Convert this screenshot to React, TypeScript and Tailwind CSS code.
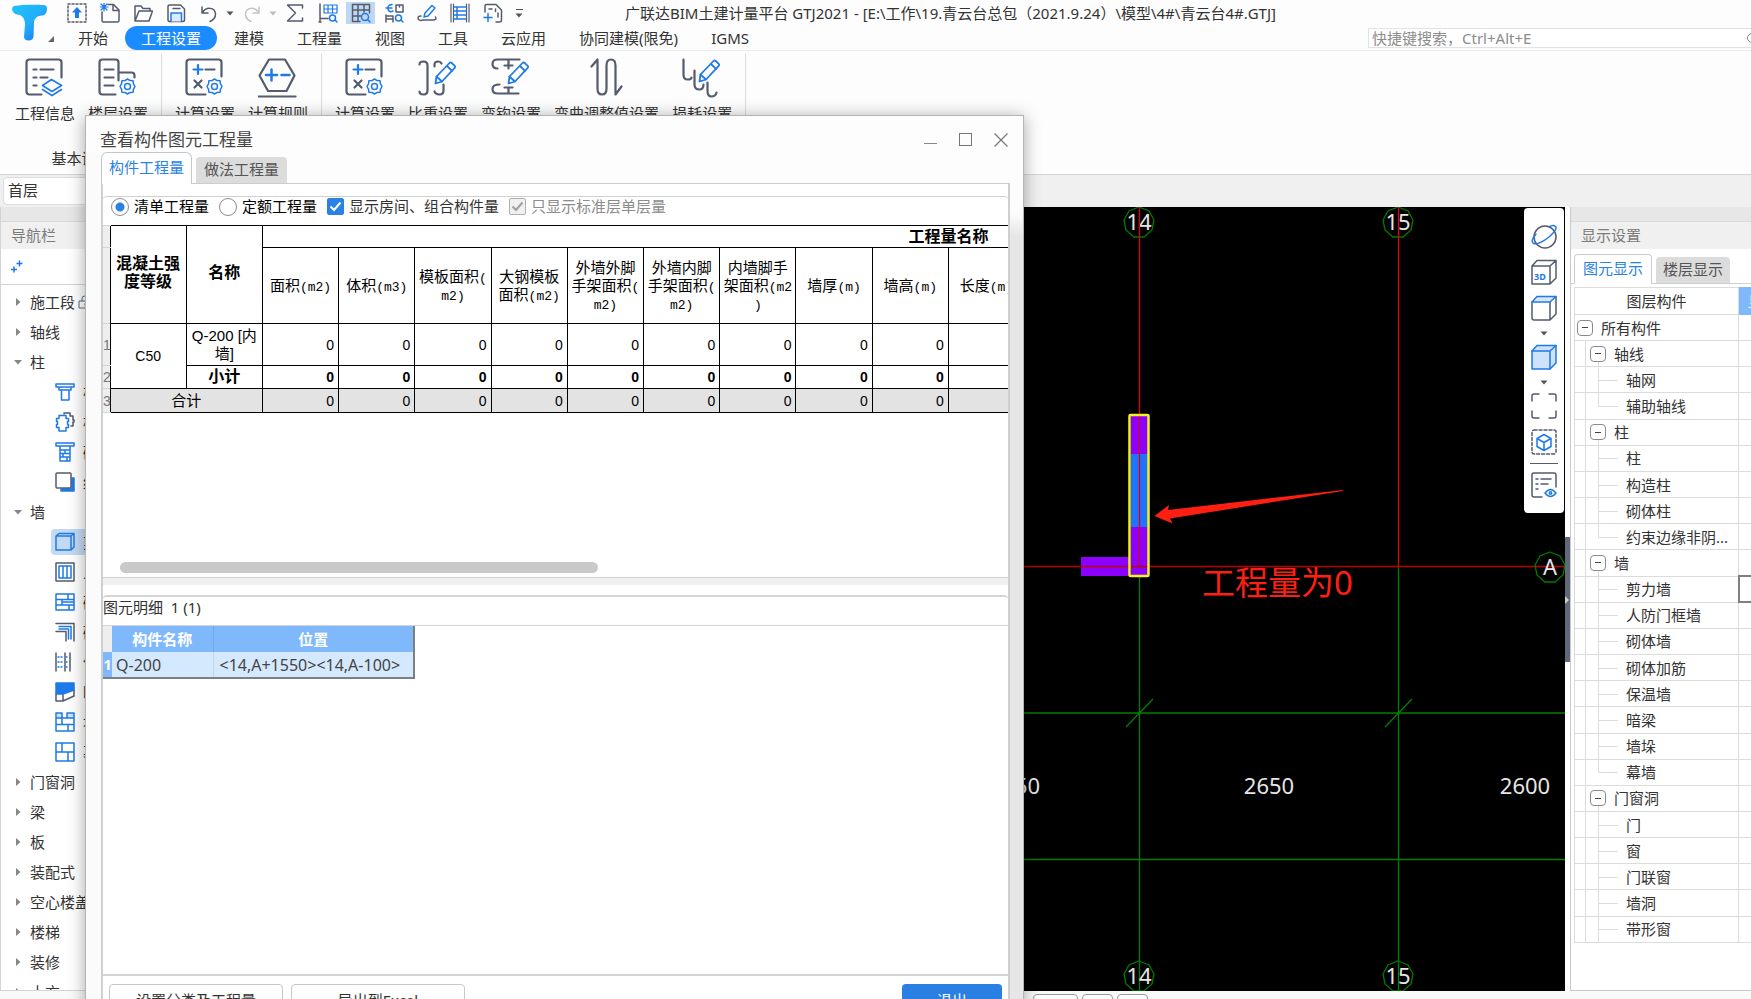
import type { ReactNode } from 'react';

const INK = '#545b6d';
const BLUE = '#1f7ae8';

function Icon({ w = 20, h = 20, children }: { w?: number; h?: number; children: ReactNode }) {
  return (
    <svg
      width={w}
      height={h}
      viewBox={`0 0 ${w} ${h}`}
      fill="none"
      stroke={INK}
      strokeWidth="1.5"
      strokeLinecap="round"
      strokeLinejoin="round"
      className="shrink-0"
      aria-hidden="true"
    >
      {children}
    </svg>
  );
}

function Caret({ color = '#555' }: { color?: string }) {
  return (
    <svg width="8" height="5" viewBox="0 0 8 5" className="shrink-0" aria-hidden="true">
      <path d="M0.5 0.5h7L4 4.5z" fill={color} />
    </svg>
  );
}

const gearPath =
  'M9 1.5l2.6 1.6 3 .1.3 3L16.500 9l-1.600 2.800-.3 3-3 .1L9 16.500l-2.600-1.600-3-.1-.3-3L1.500 9l1.600-2.800.3-3 3-.1z';

function Gear({ x, y }: { x: number; y: number }) {
  return (
    <g transform={`translate(${x} ${y})`} stroke={BLUE} strokeWidth="1.500">
      <path d={gearPath} />
      <circle cx="9" cy="9" r="3" />
    </g>
  );
}

function Pencil({ x, y }: { x: number; y: number }) {
  return (
    <g transform={`translate(${x} ${y})`} stroke={BLUE} strokeWidth="1.800" fill="#fff">
      <path d="M1 22l1-7L15 1.500q1-1 2.200 0l3 2.800q1 1 0 2L7.500 20z" />
      <path d="M12.500 4.500l5 4.800M2 15l5.500 5" fill="none" />
    </g>
  );
}

const quickIcons: Record<string, ReactNode> = {
  pin: (
    <>
      <rect x="1" y="1" width="18" height="18" strokeDasharray="2 2" />
      <path d="M10 4l5 5.500h-3V15H8V9.500H5z" fill={BLUE} stroke="none" />
    </>
  ),
  create: (
    <>
      <path d="M8 1.500h5.500L19 7v10.500q0 1.500-1.500 1.500h-14Q2 19 2 17.500V9M13 2v5.500h5.500" />
      <path d="M1 1l6 6M7 1L1 7M4 0v8M0 4h8" stroke={BLUE} strokeWidth="1.200" />
    </>
  ),
  open: <path d="M2 18V3h6l2 2.500h7V8M2 18L6 8h13.500L16 18z" />,
  save: (
    <>
      <path d="M2 3.500Q2 2 3.500 2h11L18.500 6v11q0 1.500-1.500 1.500H3.500Q2 18.500 2 17z" />
      <path d="M7 5.500h7" />
      <path d="M5 18.500V10h10.500v8.500" stroke={BLUE} fill="#dcebfd" />
    </>
  ),
  undo: <path d="M3 4v6h6M3.500 9.500C7 3.500 16 4 16.500 11c0 4-3 6.500-5.500 7.500" />,
  redo: <path d="M17 4v6h-6M16.500 9.500C13 3.500 4 4 3.500 11c0 4 3 6.500 5.500 7.500" stroke="#c4c4c4" />,
  sum: <path d="M17.500 5V2h-15l8 8-8 8h15v-3" />,
  report: (
    <>
      <path d="M2 1v14.500M2 15.500h8M1 19h2M2 15.500V19" />
      <path d="M6 2h13v8H6zM6 6h13M10 2v8M14.500 2v8" stroke={BLUE} strokeWidth="1.200" />
      <circle cx="14.500" cy="15" r="3" stroke={BLUE} />
      <path d="M17 17l2 2" stroke={BLUE} />
    </>
  ),
  view: (
    <>
      <path d="M9 18.500H1.500v-17h17V10M1.500 7h17M1.500 13H10M7 1.500v17M13 1.500V9" />
      <circle cx="14" cy="14" r="3.500" stroke={BLUE} />
      <path d="M16.500 16.500L19 19" stroke={BLUE} />
    </>
  ),
  steel: (
    <>
      <path d="M12 2h7v7h-7zM2 13h7v6M2 12v7M2 16h7M15.500 2v2" />
      <path d="M8 1.500Q3 2 4 6t5 2M2 5h6" stroke={BLUE} />
      <circle cx="14.500" cy="15" r="3" stroke={BLUE} />
      <path d="M17 17l2 2" stroke={BLUE} />
    </>
  ),
  edit: (
    <>
      <path d="M4 13Q0 13 1.500 16.500 3 18 6 17h10q4 0 2.500-3" />
      <path d="M7 14l1-4 7-7.500 3 2.500-7 8z" stroke={BLUE} />
    </>
  ),
  grid: (
    <>
      <path d="M3.500 1v18M16.500 1v18M1 1v18M19 1v18" strokeWidth="1.200" />
      <path d="M4 4h12M4 8h12M4 12h12M4 16h12M7 4v12" stroke={BLUE} />
    </>
  ),
  addPage: (
    <>
      <path d="M2 9V3q0-1.500 1.500-1.500H13L18.500 7v10q0 2-2 2H13M6 6h3M12.500 8.500V6M15 10v4" />
      <path d="M1 14.500h8M5 10.500v8" stroke={BLUE} />
    </>
  ),
};

function QuickButton({ name, label, active = false }: { name: string; label: string; active?: boolean }) {
  return (
    <button
      type="button"
      aria-label={label}
      className={
        active
          ? 'flex h-[22px] w-[29px] items-center justify-center bg-[#bfd8f2]'
          : 'flex h-[22px] w-[29px] items-center justify-center'
      }
    >
      <Icon>{quickIcons[name]}</Icon>
    </button>
  );
}

function Logo() {
  return (
    <svg width="38" height="38" viewBox="0 0 38 38" aria-hidden="true">
      <defs>
        <linearGradient id="logoFill" x1="0" y1="0" x2="1" y2="1">
          <stop offset="0" stopColor="#1cc4f5" />
          <stop offset="0.5" stopColor="#22aefb" />
          <stop offset="1" stopColor="#0b6cf5" />
        </linearGradient>
      </defs>
      <path
        d="M4 2C12 .5 26 .5 34 1q3.500.5 3 4.500-.5 5-4 6c-5 0-8 2-9 6l-.5 15q-.5 4-5 4t-4.500-4l1-12C15 14 12 11 7 10.500 3 10 0 3.500 4 2z"
        fill="url(#logoFill)"
      />
    </svg>
  );
}

const calcSettingIcon = (
  <>
    <path d="M20 36H4q-3 0-3-3V4q0-3 3-3h29q3 0 3 3v14" />
    <path d="M8 11h9M12.500 6.500v9" stroke={BLUE} />
    <path d="M20 11h9M9 22l7 7M16 22l-7 7" />
    <Gear x={20} y={19} />
  </>
);

const ribbonGroups = [
  {
    title: '基本设置',
    items: [
      {
        label: '工程信息',
        icon: (
          <>
            <path d="M16 36H4q-3 0-3-3V4q0-3 3-3h29q3 0 3 3v15" />
            <path d="M8 11h3M15 11h13M8 19h3M15 19h7M8 27h3" />
            <path d="M17 27l9-6 10 6-9.500 6zM17 31l9.500 6 9.500-6" stroke={BLUE} strokeWidth="1.600" />
          </>
        ),
      },
      {
        label: '楼层设置',
        icon: (
          <>
            <path d="M17 36H4q-3 0-3-3V4q0-3 3-3h13q3 0 3 3v18M20 14h13q3 0 3 3v2M6 11h9M6 19h9M6 27h9" />
            <Gear x={20} y={19} />
          </>
        ),
      },
    ],
  },
  {
    title: '',
    items: [
      { label: '计算设置', icon: calcSettingIcon },
      {
        label: '计算规则',
        icon: (
          <>
            <path d="M10.500 1h16L36 17l-8 15.500H9.500L1 17z" />
            <path d="M0 38h37" />
            <path d="M7.500 16.500h11M13 11v11M23 16.500h8" stroke={BLUE} strokeWidth="2.500" />
          </>
        ),
      },
    ],
  },
  {
    title: '',
    items: [
      { label: '计算设置', icon: calcSettingIcon },
      {
        label: '比重设置',
        icon: (
          <>
            <path d="M1 6q0-3 4-3t4 4v25q0 4-4 4t-4-3M16 8V6q0-3 4-3 2 0 3 2M25 26v6q0 4-4 4t-5-3" />
            <Pencil x={16} y={3} />
          </>
        ),
      },
      {
        label: '弯钩设置',
        icon: (
          <>
            <path d="M28 1H6Q1 1 1 5.500T6 10M17 1v9M13 7h8M8 26q-7 0-7 4.500T6 35h21M17 29v6M13 29h8" />
            <Pencil x={16} y={3} />
          </>
        ),
      },
      {
        label: '弯曲调整值设置',
        icon: <path d="M4 8l6-7v29q0 6 4.500 6t4.500-6V7q0-6 4.500-6T28 7v29l6-8" />,
      },
      {
        label: '损耗设置',
        icon: (
          <>
            <path d="M1 1v15q0 5 4 5t4-2M12 12v14q0 5 5 5 4 0 4-5M25 24v8q0 6 4 6t5-4" />
            <Pencil x={16} y={1} />
          </>
        ),
      },
    ],
  },
];

const menuTabs = ['开始', '工程设置', '建模', '工程量', '视图', '工具', '云应用', '协同建模(限免)', 'IGMS'];

function Header() {
  return (
    <header className="shrink-0 bg-[#fdfdfd]">
      <div className="flex h-[51px] border-b border-[#ececec]">
        <div className="flex w-[62px] items-end pb-2 pl-[10px]">
          <Logo />
          <svg width="6" height="6" viewBox="0 0 6 6" aria-hidden="true">
            <path d="M6 0v6H0z" fill="#666" />
          </svg>
        </div>
        <div className="flex min-w-0 flex-1 flex-col">
          <div className="flex h-[27px] items-center">
            <div className="flex h-6 w-[563px] items-center gap-1">
              <QuickButton name="pin" label="固定" />
              <QuickButton name="create" label="新建" />
              <QuickButton name="open" label="打开" />
              <QuickButton name="save" label="保存" />
              <QuickButton name="undo" label="撤销" />
              <span className="-mx-px">
                <Caret />
              </span>
              <QuickButton name="redo" label="恢复" />
              <span className="-mx-px">
                <Caret color="#bbb" />
              </span>
              <QuickButton name="sum" label="汇总计算" />
              <QuickButton name="report" label="查看报表" />
              <QuickButton name="view" label="查看工程量" active />
              <QuickButton name="steel" label="查看钢筋量" />
              <QuickButton name="edit" label="编辑钢筋" />
              <QuickButton name="grid" label="钢筋三维" />
              <QuickButton name="addPage" label="新增" />
              <button type="button" aria-label="自定义" className="ml-1 flex flex-col items-center gap-[3px]">
                <span className="h-px w-[7px] bg-[#555]" />
                <Caret />
              </button>
            </div>
            <h1 className="truncate text-[15px]">
              广联达BIM土建计量平台 GTJ2021 - [E:\工作\19.青云台总包（2021.9.24）\模型\4#\青云台4#.GTJ]
            </h1>
          </div>
          <div className="flex h-[24px] items-center justify-between">
            <nav className="flex items-center gap-px">
              {menuTabs.map((tab) => (
                <button
                  key={tab}
                  type="button"
                  className={
                    tab === '工程设置'
                      ? 'h-6 rounded-full bg-[#1b8cff] px-4 text-[15px] leading-6 text-white'
                      : 'h-6 px-4 text-[15px] leading-6 whitespace-nowrap'
                  }
                >
                  {tab}
                </button>
              ))}
            </nav>
            <div className="flex h-5 w-[383px] items-center border border-r-0 border-[#e2e2e2] bg-white pl-[3px]">
              <input
                aria-label="快捷键搜索"
                placeholder="快捷键搜索，Ctrl+Alt+E"
                className="min-w-0 flex-1 text-[15px] leading-[18px] outline-none placeholder:text-[#8c8c8c]"
              />
              <svg width="5" height="14" viewBox="0 0 5 14" fill="none" stroke="#888" aria-hidden="true">
                <circle cx="6" cy="7" r="4.500" />
              </svg>
            </div>
          </div>
        </div>
      </div>
      <div className="flex h-[123px] pt-[3px] pl-[2px]">
        {ribbonGroups.map((group, i) => (
          <div key={i} className="flex flex-col border-r border-[#dcdcdc] px-[13px]">
            <div className="flex flex-1 gap-[13px]">
              {group.items.map((item) => (
                <button key={item.label} type="button" className="flex flex-col items-center pt-[4px] text-[15px]">
                  <svg
                    width="40"
                    height="40"
                    viewBox="-0.500 -0.500 40 40"
                    fill="none"
                    stroke={INK}
                    strokeWidth="2.200"
                    strokeLinecap="round"
                    strokeLinejoin="round"
                    aria-hidden="true"
                  >
                    {item.icon}
                  </svg>
                  <span className="mt-1 leading-[22px] whitespace-nowrap">{item.label}</span>
                </button>
              ))}
            </div>
            <div className="h-[27px] text-center text-[15px] leading-[22px]">{group.title}</div>
          </div>
        ))}
      </div>
    </header>
  );
}

const navIcons: Record<string, ReactNode> = {
  column: <path d="M1 2h18v3H1zM4 5v3h12V5M6.500 8v10h7.500V8" stroke={BLUE} />,
  structColumn: (
    <>
      <path d="M9 2V1h6v3h3v4h1v2h-1v4h-2" />
      <path d="M4 3.500h7v3h2.500v3h-1v3h1v3H11v3.500H4v-3.500H1.500v-3h1v-3h-1v-3H4z" stroke={BLUE} fill="#fff" />
    </>
  ),
  brickColumn: <path d="M1 1h18v3H1zM5 4v15h10V4M5 8h10M5 11.500h10M5 15h10M10 8v3.500M8 11.500V15M12 15v4" stroke={BLUE} />,
  edge: (
    <>
      <path d="M17 6h2v13H6v-2h11z" fill={BLUE} stroke={BLUE} />
      <rect x="1" y="1" width="15" height="15" rx="1" fill="#fff" />
    </>
  ),
  shearWall: <path d="M1 4h15v14H1zM1 4l3-2.500h15V15l-3 3M16 4l3-2.500" stroke={BLUE} />,
  frameWall: (
    <>
      <rect x="1" y="1" width="18" height="18" />
      <path d="M4 4h12v12H4zM8 4v12M12 4v12" stroke={BLUE} />
    </>
  ),
  brickWall: <path d="M1 2h18v16H1zM1 7.500h18M1 13h18M13 2v5.500M7 7.500V13M14 13v5M7 10h12" stroke={BLUE} />,
  rebar: (
    <>
      <path d="M1 1.500h18V19M1 9.500h10V19" />
      <path d="M4 4.500h12V17M4 7h9.500v10" stroke={BLUE} />
    </>
  ),
  insulation: (
    <>
      <path d="M1 1v18M10 1v18M15 1v18" />
      <path d="M3 5h6M3 10h6M3 15h6M11 5h3M11 10h3M11 15h3" stroke={BLUE} strokeDasharray="1 2" />
    </>
  ),
  hiddenBeam: (
    <>
      <path d="M1 12v7h7l11-5V8M8 12v7" />
      <path d="M1 1h18v7L8 12H1z" fill={BLUE} stroke={BLUE} />
    </>
  ),
  pier: (
    <>
      <path d="M1 1h7v5H1zM12 1h7v5h-7z" fill="#cfe2fa" stroke="none" />
      <path d="M1 1h6v5h5V1h7v18H1zM1 6h18M1 12.500h18M7 6v6.500M13 12.500V19" stroke={BLUE} />
    </>
  ),
  curtain: <path d="M1 1h18v18H1zM1 10h18M7 1v9M13 10v9" stroke={BLUE} />,
};

type NavItem = { label: string; state?: 'open' | 'closed'; icon?: string; selected?: boolean };

const navItems: NavItem[] = [
  { label: '施工段', state: 'closed' },
  { label: '轴线', state: 'closed' },
  { label: '柱', state: 'open' },
  { label: '柱', icon: 'column' },
  { label: '构造柱', icon: 'structColumn' },
  { label: '砌体柱', icon: 'brickColumn' },
  { label: '约束边缘非阴影区', icon: 'edge' },
  { label: '墙', state: 'open' },
  { label: '剪力墙', icon: 'shearWall', selected: true },
  { label: '人防门框墙', icon: 'frameWall' },
  { label: '砌体墙', icon: 'brickWall' },
  { label: '砌体加筋', icon: 'rebar' },
  { label: '保温墙', icon: 'insulation' },
  { label: '暗梁', icon: 'hiddenBeam' },
  { label: '墙垛', icon: 'pier' },
  { label: '幕墙', icon: 'curtain' },
  { label: '门窗洞', state: 'closed' },
  { label: '梁', state: 'closed' },
  { label: '板', state: 'closed' },
  { label: '装配式', state: 'closed' },
  { label: '空心楼盖', state: 'closed' },
  { label: '楼梯', state: 'closed' },
  { label: '装修', state: 'closed' },
  { label: '土方', state: 'closed' },
];

function NavPanel() {
  return (
    <aside className="flex w-[210px] shrink-0 flex-col border-r border-b border-l border-[#d4d4d4] bg-white">
      <div className="h-[15px] shrink-0 border-b border-[#dadada] bg-[#e7e7e7]" />
      <h2 className="h-[27px] shrink-0 bg-[#f0f0f0] pl-[10px] text-[15px] leading-[27px] text-[#7c7c7c]">导航栏</h2>
      <div className="flex h-[36px] shrink-0 items-center border-b border-[#d4d4d4] pl-[10px]">
        <button type="button" aria-label="添加">
          <svg width="12" height="14" viewBox="0 0 12 14" stroke={BLUE} strokeWidth="1.500" aria-hidden="true">
            <path d="M0 9.500h6M3 6.500v6M5.500 3.500h6M8.500.5v6" />
          </svg>
        </button>
      </div>
      <ul className="min-h-0 flex-1 overflow-hidden pt-0.5 text-[15px]">
        {navItems.map((item, i) =>
          item.icon ? (
            <li key={i} className="flex h-[30px] items-center pl-[50px]">
              <div
                className={
                  item.selected
                    ? 'flex h-[26px] flex-1 items-center gap-2 rounded-l bg-[#c3daf4] pl-1'
                    : 'flex h-[26px] flex-1 items-center gap-2 pl-1'
                }
              >
                <Icon>{navIcons[item.icon]}</Icon>
                <span className="whitespace-nowrap">{item.label}</span>
              </div>
            </li>
          ) : (
            <li key={i} className="flex h-[30px] items-center">
              <span className="flex w-[29px] justify-center pl-1">
                <svg width="8" height="8" viewBox="0 0 8 8" fill="#868686" aria-hidden="true">
                  {item.state === 'open' ? <path d="M0 2h8L4 6.500z" /> : <path d="M2 0v8l4.500-4z" />}
                </svg>
              </span>
              <span>{item.label}</span>
              {i === 0 && (
                <svg width="14" height="14" viewBox="0 0 14 14" fill="none" stroke="#5a6b85" className="ml-[3px]" aria-hidden="true">
                  <path d="M1 6h12v7H1zM4 6V3.500Q4 1 7 1t3 2.500V6M7 8.500v2" />
                </svg>
              )}
            </li>
          ),
        )}
      </ul>
    </aside>
  );
}

function AxisMark({ x, y, label }: { x: number; y: number; label: string }) {
  return (
    <>
      <path
        d={`M${x} ${y - 15}l10 4 5 9-2 10-8 7h-10l-8-7-2-10 5-9z`}
        fill="none"
        stroke="#007a00"
        strokeWidth="1.300"
      />
      <text x={x} y={y + 8} textAnchor="middle" fontSize="22" fill="#e6e6e6">
        {label}
      </text>
    </>
  );
}

function Drawing() {
  return (
    <svg
      viewBox="210 207 1355 784"
      preserveAspectRatio="xMaxYMin slice"
      className="absolute inset-0 h-full w-full"
      role="img"
      aria-label="轴网平面图"
    >
      <g strokeWidth="1.300" fill="none">
        <path d="M1139.500 566V991M1398.500 566V991M210 713H1565M210 859.500H1565" stroke="#008000" />
        <path d="M1126 727l27-28M1385 727l27-28" stroke="#008000" />
      </g>
      <path d="M1081 557h48v19h-48z" fill="#8b00ff" />
      <path d="M1131 416h17v159h-17z" fill="#8b00ff" />
      <path d="M1131 454h17v73h-17z" fill="#1f73ff" />
      <AxisMark x={1139} y={222} label="14" />
      <AxisMark x={1398} y={222} label="15" />
      <AxisMark x={1139} y={976} label="14" />
      <AxisMark x={1398} y={976} label="15" />
      <path d="M1139.500 207V566M1398.500 207V566" stroke="#e00010" strokeWidth="1.300" />
      <path d="M210 566.500H1565" stroke="#b80000" strokeWidth="1.600" />
      <AxisMark x={1550} y={567} label="A" />
      <rect x="1129.500" y="415" width="19" height="161" rx="1" fill="none" stroke="#f4f41c" strokeWidth="2.500" />
      <g fontSize="22" fill="#e6e6e6" textAnchor="middle">
        <text x="1015" y="794">2650</text>
        <text x="1269" y="794">2650</text>
        <text x="1525" y="794">2600</text>
      </g>
      <path d="M1154.500 516l14.500-11-1 5 175-20v1L1170 518.500l2.500 5z" fill="#ff1f12" />
      <text x="1202" y="595" fontSize="33" fill="#ff1f12">
        工程量为0
      </text>
    </svg>
  );
}

function ViewTools() {
  return (
    <div className="absolute top-px right-px flex w-10 flex-col items-center rounded bg-white pt-4 pb-[15px]">
      <button type="button" aria-label="动态观察">
        <Icon w={26} h={26}>
          <circle cx="14" cy="13" r="11" />
          <path d="M5 10Q-1 17 2.500 19.500 8 21 18 13 27 5 24.500 2.500 22 .5 18 3" stroke={BLUE} />
        </Icon>
      </button>
      <button type="button" aria-label="三维" className="mt-[9px]">
        <Icon w={26} h={26}>
          <path d="M1 7h18v18H1zM1 7l5-5.500h19V19l-6 6M19 7l6-5.500" />
          <text x="3" y="20.500" fontSize="9" fontWeight="700" fill={BLUE} stroke="none">
            3D
          </text>
        </Icon>
      </button>
      <button type="button" aria-label="俯视" className="mt-[10px] flex flex-col items-center gap-[10px]">
        <Icon w={26} h={26}>
          <path d="M1 7v16q0 2 2 2h16l6-6V1.500M19 7v18" />
          <path d="M1 7l5-5.500h19L19 7z" stroke={BLUE} fill="#d6e7fc" />
        </Icon>
        <Caret />
      </button>
      <button type="button" aria-label="显示模式" className="mt-2 flex flex-col items-center gap-[10px]">
        <Icon w={26} h={26}>
          <path d="M1 7l5-5.500h19V19l-6 6H1z" stroke={BLUE} fill="#cfe2fb" />
          <path d="M1 7h18v18M19 7l6-5.500" stroke={BLUE} />
        </Icon>
        <Caret />
      </button>
      <button type="button" aria-label="全屏" className="mt-2">
        <Icon w={26} h={26}>
          <path d="M1 8V3q0-2 2-2h5M18 1h5q2 0 2 2v5M25 18v5q0 2-2 2h-5M8 25H3q-2 0-2-2v-5" />
        </Icon>
      </button>
      <button type="button" aria-label="局部三维" className="mt-[10px]">
        <Icon w={26} h={26}>
          <rect x="1" y="1" width="24" height="24" rx="2" strokeDasharray="3 2" />
          <path d="M13 5.500l7 4v8l-7 4-7-4v-8zM6 9.500l7 4 7-4M13 13.500v8" stroke={BLUE} />
        </Icon>
      </button>
      <span className="mt-2 h-px w-7 bg-[#545b6d]" />
      <button type="button" aria-label="显示设置" className="mt-2">
        <Icon w={26} h={26}>
          <path d="M11 25H3q-2 0-2-2V3q0-2 2-2h20q2 0 2 2v12M5 7h2M10 7h10M5 12h2M10 12h7M5 17h2" />
          <path d="M14 21q5.500-7 11 0-5.500 7-11 0z" stroke={BLUE} />
          <circle cx="19.500" cy="21" r="1.200" stroke={BLUE} />
        </Icon>
      </button>
    </div>
  );
}

type LayerRow = { label: string; level: 0 | 1 | 2; last?: boolean };

const layerRows: LayerRow[] = [
  { label: '所有构件', level: 0 },
  { label: '轴线', level: 1 },
  { label: '轴网', level: 2 },
  { label: '辅助轴线', level: 2, last: true },
  { label: '柱', level: 1 },
  { label: '柱', level: 2 },
  { label: '构造柱', level: 2 },
  { label: '砌体柱', level: 2 },
  { label: '约束边缘非阴...', level: 2, last: true },
  { label: '墙', level: 1 },
  { label: '剪力墙', level: 2 },
  { label: '人防门框墙', level: 2 },
  { label: '砌体墙', level: 2 },
  { label: '砌体加筋', level: 2 },
  { label: '保温墙', level: 2 },
  { label: '暗梁', level: 2 },
  { label: '墙垛', level: 2 },
  { label: '幕墙', level: 2, last: true },
  { label: '门窗洞', level: 1 },
  { label: '门', level: 2 },
  { label: '窗', level: 2 },
  { label: '门联窗', level: 2 },
  { label: '墙洞', level: 2 },
  { label: '带形窗', level: 2 },
];

function Collapse({ label }: { label: string }) {
  return (
    <button
      type="button"
      aria-label={`收起${label}`}
      className="relative flex size-4 shrink-0 items-center justify-center rounded-sm border border-[#8a8a8a] bg-white"
    >
      <span className="h-px w-[6px] bg-[#444]" />
    </button>
  );
}

function LayerCell({ row }: { row: LayerRow }) {
  if (row.level === 0) {
    return (
      <div className="flex items-center gap-2 pl-[2px]">
        <Collapse label={row.label} />
        <span>{row.label}</span>
      </div>
    );
  }
  if (row.level === 1) {
    return (
      <>
        <span className="absolute inset-y-0 left-[10px] w-px bg-[#dcdcdc]" />
        <span className="absolute bottom-0 left-[23px] h-2 w-px bg-[#dcdcdc]" />
        <div className="flex items-center gap-2 pl-[15px]">
          <Collapse label={row.label} />
          <span>{row.label}</span>
        </div>
      </>
    );
  }
  return (
    <>
      <span className="absolute inset-y-0 left-[10px] w-px bg-[#dcdcdc]" />
      <span
        className={
          row.last ? 'absolute top-0 left-[23px] h-1/2 w-px bg-[#dcdcdc]' : 'absolute inset-y-0 left-[23px] w-px bg-[#dcdcdc]'
        }
      />
      <span className="absolute top-1/2 left-[23px] h-px w-5 bg-[#dcdcdc]" />
      <div className="pl-[51px] whitespace-nowrap">{row.label}</div>
    </>
  );
}

function DisplayPanel() {
  return (
    <aside className="flex w-[181px] shrink-0 flex-col overflow-hidden border-b border-l border-[#c9c9cd] bg-white">
      <div className="h-[15px] shrink-0 border-b border-[#dadada] bg-[#e7e7e7]" />
      <h2 className="h-[27px] shrink-0 bg-[#f0f0f0] pl-[10px] text-[15px] leading-[27px] text-[#7c7c7c]">显示设置</h2>
      <div className="flex h-[35px] shrink-0 items-end gap-1 border-b border-[#d0d0d0] pl-[3px] text-[15px]" role="tablist">
        <button
          type="button"
          role="tab"
          aria-selected="true"
          className="-mb-px h-[30px] rounded-t border border-b-0 border-[#c8ccd2] bg-white px-2 pb-0.5 text-[#2a82e4]"
        >
          图元显示
        </button>
        <button
          type="button"
          role="tab"
          aria-selected="false"
          className="h-[26px] rounded-t bg-[#dcdcdc] px-[7px] pb-0.5 text-[#555]"
        >
          楼层显示
        </button>
      </div>
      <table className="mt-[3px] ml-[3px] h-[656px] w-[194px] table-fixed border-collapse text-[15px] leading-5">
        <colgroup>
          <col className="w-[164px]" />
          <col />
        </colgroup>
        <thead>
          <tr className="h-[27px]">
            <th className="border border-[#dcdcdc] p-0 font-normal">图层构件</th>
            <th className="border border-[#7fb9fb] bg-[#7fb9fb] py-0 pr-0 pl-[9px] text-left font-normal whitespace-nowrap text-white">
              显示
            </th>
          </tr>
        </thead>
        <tbody>
          {layerRows.map((row, i) => (
            <tr key={i}>
              <td className="relative border border-[#dcdcdc] p-0">
                <LayerCell row={row} />
              </td>
              <td
                className={
                  row.label === '剪力墙' ? 'border-2 border-[#7f7f7f] p-0' : 'border border-[#dcdcdc] p-0'
                }
              />
            </tr>
          ))}
        </tbody>
      </table>
    </aside>
  );
}

// Latin runs inside the report headings are set in a fixed-pitch face.
function Mixed({ text }: { text: string }) {
  return (
    <>
      {text.split(/([\x20-\x7e]+)/).map((part, i) =>
        i % 2 === 1 ? (
          <span key={i} className="font-['Liberation_Mono',monospace] text-[13px]">
            {part}
          </span>
        ) : (
          part
        ),
      )}
    </>
  );
}

const quantityColumns = [
  ['面积(m2)'],
  ['体积(m3)'],
  ['模板面积(', 'm2)'],
  ['大钢模板', '面积(m2)'],
  ['外墙外脚', '手架面积(', 'm2)'],
  ['外墙内脚', '手架面积(', 'm2)'],
  ['内墙脚手', '架面积(m2', ')'],
  ['墙厚(m)'],
  ['墙高(m)'],
  ['长度(m)'],
];

const cell = 'border border-black p-0';
const numCell = 'border border-black py-0 pr-1 pl-0 text-right text-[14px]';
const rowHead = 'border-y border-l-0 border-y-[#d4d4d4] bg-[#eee] p-0 text-[14px] font-normal text-[#777]';

function QuantityTable() {
  const filled = quantityColumns.slice(0, 9);
  return (
    <table className="w-[1532px] table-fixed border-collapse font-['Liberation_Sans','Noto_Sans_CJK_SC',sans-serif] text-[15px] leading-[18px] text-black">
      <colgroup>
        <col className="w-[7px]" />
        <col span={20} />
      </colgroup>
      <thead>
        <tr className="h-[22px]">
          <th className={rowHead} />
          <th rowSpan={2} className={`${cell} pb-1 text-[16px] font-bold`}>
            混凝土强
            <br />
            度等级
          </th>
          <th rowSpan={2} className={`${cell} pb-1 text-[16px] font-bold`}>
            名称
          </th>
          <th colSpan={18} className={`${cell} text-[16px] font-bold`}>
            工程量名称
          </th>
        </tr>
        <tr className="h-[76px]">
          <th className={rowHead} />
          {quantityColumns.map((lines) => (
            <th key={lines.join('')} className={`${cell} font-normal whitespace-nowrap`}>
              {lines.map((line) => (
                <div key={line} className="h-[18px]">
                  <Mixed text={line} />
                </div>
              ))}
            </th>
          ))}
          <th colSpan={8} className={cell} />
        </tr>
      </thead>
      <tbody>
        <tr className="h-[42px]">
          <th className={rowHead}>1</th>
          <td rowSpan={2} className={`${cell} text-center text-[14px]`}>
            C50
          </td>
          <td className={`${cell} text-center whitespace-nowrap`}>
            Q-200 [内
            <br />
            墙]
          </td>
          {filled.map((c) => (
            <td key={c.join('')} className={numCell}>
              0
            </td>
          ))}
          <td className={cell} />
          <td colSpan={8} className={cell} />
        </tr>
        <tr className="h-[23px]">
          <th className={rowHead}>2</th>
          <td className={`${cell} text-center text-[16px] font-bold`}>小计</td>
          {filled.map((c) => (
            <td key={c.join('')} className={`${numCell} font-bold`}>
              0
            </td>
          ))}
          <td className={cell} />
          <td colSpan={8} className={cell} />
        </tr>
        <tr className="h-[24px] bg-[#e3e3e3]">
          <th className={rowHead}>3</th>
          <td colSpan={2} className={`${cell} text-center`}>
            合计
          </td>
          {filled.map((c) => (
            <td key={c.join('')} className={numCell}>
              0
            </td>
          ))}
          <td className={cell} />
          <td colSpan={8} className={cell} />
        </tr>
      </tbody>
    </table>
  );
}

function RadioOption({ label, checked = false }: { label: string; checked?: boolean }) {
  return (
    <label className="flex items-center gap-[5px] text-black">
      <input
        type="radio"
        name="quantityKind"
        defaultChecked={checked}
        className="size-[18px] appearance-none rounded-full border border-[#8c8c8c] bg-white checked:bg-[radial-gradient(circle,#2a82e4_4px,#fff_5px)]"
      />
      {label}
    </label>
  );
}

function CheckOption({ label, disabled = false }: { label: string; disabled?: boolean }) {
  return (
    <label className={disabled ? 'flex items-center gap-[5px] text-[#8c8c8c]' : 'flex items-center gap-[5px]'}>
      <span className="relative flex">
        <input
          type="checkbox"
          defaultChecked
          disabled={disabled}
          className="size-[17px] appearance-none rounded-xs border border-[#2a82e4] bg-[#2a82e4] disabled:border-[#b0b0b0] disabled:bg-[#f0f0f0]"
        />
        <svg
          width="17"
          height="17"
          viewBox="0 0 17 17"
          fill="none"
          stroke={disabled ? '#a0a0a0' : '#fff'}
          strokeWidth="2"
          className="pointer-events-none absolute inset-0"
          aria-hidden="true"
        >
          <path d="M3.500 8.500l3.500 3.500 6.500-7.500" />
        </svg>
      </span>
      {label}
    </label>
  );
}

function QuantityDialog() {
  return (
    <div
      role="dialog"
      aria-labelledby="dialog-title"
      className="absolute top-[115px] -bottom-8 left-[85px] flex w-[939px] flex-col border border-[#b4b4b4] bg-[linear-gradient(#fdfdfd_90px,#fafafa_100px,#e6e6e6_120px)] shadow-[0_2px_16px_rgba(0,0,0,0.35)]"
    >
      <div className="flex h-[36px] shrink-0 items-center justify-between bg-[#fdfdfd] pt-3 pr-[15px] pl-[14px]">
        <h2 id="dialog-title" className="text-[17px] leading-6 text-[#444]">
          查看构件图元工程量
        </h2>
        <div className="flex items-center gap-[21px]">
          <button type="button" aria-label="最小化">
            <svg width="14" height="14" viewBox="0 0 14 14" stroke="#888" aria-hidden="true">
              <path d="M0 10.500h13" />
            </svg>
          </button>
          <button type="button" aria-label="最大化">
            <svg width="14" height="14" viewBox="0 0 14 14" fill="none" stroke="#777" aria-hidden="true">
              <rect x="0.5" y="0.5" width="12" height="12" />
            </svg>
          </button>
          <button type="button" aria-label="关闭">
            <svg width="14" height="14" viewBox="0 0 14 14" stroke="#777" strokeWidth="1.200" aria-hidden="true">
              <path d="M.5.5l13 13M13.500.5l-13 13" />
            </svg>
          </button>
        </div>
      </div>

      <div className="flex min-h-0 flex-1 border-l-[15px] border-[#fbfbfb] pr-[13px]">
        <div className="flex min-w-0 flex-1 flex-col">
          <div className="-mr-[13px] shrink-0 bg-[#fdfdfd] pr-[13px]">
            <div className="flex h-[32px] items-end gap-1 border-b border-[#cdcdcd] text-[15px]" role="tablist">
              <button
                type="button"
                role="tab"
                aria-selected="true"
                className="-mb-px h-[32px] rounded-t-md border border-b-0 border-[#c4c8ce] bg-white px-[7px] pb-0.5 text-[#2a82e4]"
              >
                构件工程量
              </button>
              <button
                type="button"
                role="tab"
                aria-selected="false"
                className="h-[26px] rounded-t bg-[#dcdcdc] px-2 pb-0.5 text-[#555]"
              >
                做法工程量
              </button>
            </div>
          </div>
          <div className="flex min-h-0 flex-1 flex-col border-x-2 border-[#cdcfd2] bg-white pt-3">
            <section className="flex h-[382px] shrink-0 flex-col overflow-hidden rounded-t border-t border-b border-[#d0d0d0]">
              <div className="flex h-[28px] shrink-0 items-center pb-[9px] pl-2 text-[15px]">
                <div className="flex items-center gap-[10px]">
                  <RadioOption label="清单工程量" checked />
                  <RadioOption label="定额工程量" />
                  <CheckOption label="显示房间、组合构件量" />
                  <CheckOption label="只显示标准层单层量" disabled />
                </div>
              </div>
              <div className="min-h-0 flex-1 overflow-hidden">
                <QuantityTable />
              </div>
              <div className="mb-1 ml-[17px] h-[11px] w-[478px] shrink-0 rounded-full bg-[#c9c9c9]" />
            </section>
            <div className="h-[7px] shrink-0 bg-[#f0f0f0]" />
            <section className="mt-[10px] flex min-h-0 flex-1 flex-col rounded-t border-t-2 border-b-2 border-[#d4d4d4]">
              <h3 className="h-[29px] shrink-0 border-b border-[#d4d4d4] text-[15px] leading-5 whitespace-pre">图元明细  1 (1)</h3>
              <table className="w-[312px] table-fixed border-collapse border-r-2 border-b-2 border-[#7f7f7f] text-[15px] text-[#444]">
                <colgroup>
                  <col className="w-[9px]" />
                  <col className="w-[101px]" />
                  <col />
                </colgroup>
                <thead>
                  <tr className="h-[26px] bg-[#7fb9fb] text-white">
                    <th className="bg-[#eee] p-0" />
                    <th className="border-r border-[#6eabf0] p-0">构件名称</th>
                    <th className="p-0">位置</th>
                  </tr>
                </thead>
                <tbody>
                  <tr className="h-[26px] bg-[#d4e9fe]">
                    <th className="bg-[#7fb9fb] p-0 font-bold text-white">1</th>
                    <td className="border-r border-[#c8d4e0] py-0 pr-0 pl-1 text-[16px]">Q-200</td>
                    <td className="py-0 pr-0 pl-[6px] text-[16px] whitespace-nowrap">&lt;14,A+1550&gt;&lt;14,A-100&gt;</td>
                  </tr>
                </tbody>
              </table>
            </section>
            <div className="flex h-[54px] shrink-0 items-start gap-2 pt-2 pr-[6px] pl-[6px] text-[15px]">
              <button type="button" className="h-[33px] w-[174px] rounded border border-[#c8c8c8] bg-white">
                设置分类及工程量
              </button>
              <button type="button" className="h-[33px] w-[174px] rounded border border-[#c8c8c8] bg-white">
                导出到Excel
              </button>
              <button type="button" className="ml-auto h-[33px] w-[100px] rounded bg-[#2a80e2] text-white">
                退出
              </button>
            </div>
          </div>
        </div>
      </div>
    </div>
  );
}

export default function App() {
  return (
    <div className="relative flex h-screen flex-col overflow-hidden bg-[#fafafa] font-['Noto_Sans','Noto_Sans_CJK_SC',sans-serif] text-[#333]">
      <Header />
      <div className="flex h-[33px] shrink-0 items-center border-t border-[#d6d6d6] bg-[#f0f0f0] pl-[3px]">
        <select
          aria-label="楼层"
          className="h-7 w-[120px] appearance-none rounded border border-[#dedede] bg-white pb-0.5 pl-1 text-[15px]"
        >
          <option>首层</option>
        </select>
      </div>
      <main className="flex min-h-0 flex-1">
        <NavPanel />
        <div className="relative min-w-0 flex-1 overflow-hidden bg-black">
          <Drawing />
          <ViewTools />
        </div>
        <div className="flex w-[5px] shrink-0 flex-col bg-white pt-[330px]">
          <button type="button" aria-label="折叠面板" className="flex h-[125px] items-center bg-[#5f6978]">
            <svg width="5" height="8" viewBox="0 0 5 8" fill="#ccc" aria-hidden="true">
              <path d="M0 0v8l4-4z" />
            </svg>
          </button>
        </div>
        <DisplayPanel />
      </main>
      <footer className="flex h-2 shrink-0 items-start gap-1 overflow-hidden pt-[3px] pl-[1033px]">
        <span className="h-6 w-[45px] shrink-0 rounded border border-[#999] bg-white" />
        <span className="h-6 w-[31px] shrink-0 rounded border border-[#999] bg-white" />
        <span className="h-6 w-[31px] shrink-0 rounded border border-[#999] bg-white" />
      </footer>
      <QuantityDialog />
    </div>
  );
}
